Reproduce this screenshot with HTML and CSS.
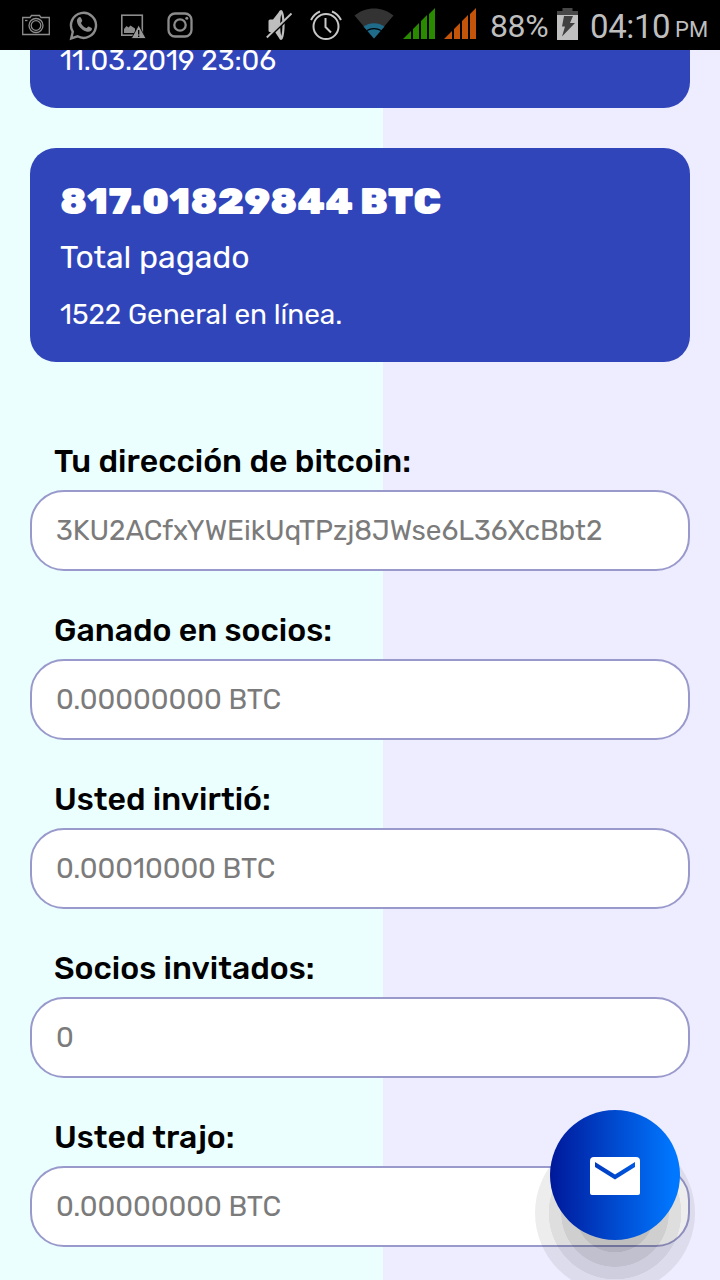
FILE: index.html
```html
<!DOCTYPE html>
<html lang="es">
<head>
    <meta charset="UTF-8">
    <meta name="viewport" content="width=device-width, initial-scale=1.0">
    <title>Bitcoin</title>
    <link rel="stylesheet" href="styles.css">
</head>
<body>
    <header class="status-bar">
        <div class="status-left">
            <svg class="icon-camera" width="28" height="24" viewBox="0 0 28 24" fill="none" stroke="#8c8c8c" stroke-width="1.3">
                <path d="M.7 4.500H8l1.500-2h8l1.500 2h8.300v17H.7z"/>
                <circle cx="14" cy="12.500" r="7"/>
                <circle cx="14" cy="12.500" r="4.800"/>
                <path d="M3 7.500h2.500"/>
            </svg>
            <svg class="icon-whatsapp" width="30" height="32" viewBox="0 0 30 32">
                <path d="M2.200 29.500l1.600-6.700A12.500 12.500 0 1 1 8.500 27.300z" fill="none" stroke="#8c8c8c" stroke-width="2.400"/>
                <path d="M9.300 8.800c.8-.9 2.200-1 2.700 0l1.200 2.700c.3 1-1.300 2-1.200 2.600.7 2.200 2.900 4.200 5.200 5 .8.2 1.700-1.900 2.600-1.600l2.800 1.400c.9.600.2 2.300-.8 3.100-2 1.500-4.800.8-8.200-1.300-3.300-2.200-5.600-5.600-5.700-8.700 0-1.300.6-2.400 1.400-3.200z" fill="#8c8c8c"/>
            </svg>
            <svg class="icon-image" width="25" height="25" viewBox="0 0 25 25">
                <rect x=".8" y="1.200" width="20.500" height="20" fill="none" stroke="#8c8c8c" stroke-width="1.600"/>
                <path d="M3 19v-4l2.500-3 2 1.500 2-2 4.500 3v4.500z" fill="#8c8c8c"/>
                <path d="M17.700 11L25 24.500H10.300z" fill="#999" stroke="#000" stroke-width=".8"/>
                <path d="M17.700 16v4.500M17.700 21.500V23" stroke="#000" stroke-width="1.300"/>
            </svg>
            <svg class="icon-instagram" width="26" height="26" viewBox="0 0 26 26" fill="none" stroke="#8c8c8c" stroke-width="2.300">
                <rect x="1.500" y="1.500" width="23" height="23" rx="6.500"/>
                <circle cx="13" cy="13" r="5.700"/>
                <circle cx="19.800" cy="6.300" r="1.500" fill="#8c8c8c" stroke="none"/>
            </svg>
        </div>
        <div class="status-right">
            <svg class="icon-mute" width="27" height="32" viewBox="0 0 27 32">
                <path d="M2.500 12q0-1.500 1.500-1.500h3l5.500-7c2-3.500 3.500-3 4.500-.5 2.200 6 2.200 20 0 26-1 2.500-3 2.500-4 0l-4-6H4q-1.500 0-1.500-1.500z" fill="#bebebe"/>
                <path d="M15.300 5c1.500 6 1.500 16 0 22-1.500-5-1.500-17 0-22z" fill="#000"/>
                <path d="M.5 30L26.500 5" stroke="#000" stroke-width="3"/>
                <path d="M.8 28.500L25.500 4.500" stroke="#bebebe" stroke-width="1.900"/>
            </svg>
            <svg class="icon-alarm" width="32" height="31" viewBox="0 0 32 31" fill="none" stroke="#c8c8c8" stroke-width="2">
                <circle cx="16" cy="16.500" r="12.500"/>
                <path d="M15.500 8v9l5.500 5.500"/>
                <path d="M1 10C3 6 6 3 10 1.500M31 10C29 6 26 3 22 1.500"/>
            </svg>
            <svg class="icon-wifi" width="40" height="31" viewBox="0 0 40 31">
                <path d="M.5 7.500C12-2 28-2 39.500 7.500L20 30.500z" fill="#333"/>
                <path d="M9.500 18.500C15.500 14 24.500 14 30.500 18.500L20 30.500z" fill="#1e6b8a"/>
                <path d="M13 22.500C17 20 23 20 27 22.500" fill="none" stroke="#000" stroke-width="1.300"/>
            </svg>
            <svg class="icon-signal" width="32" height="31" viewBox="0 0 32 31" fill="#298a00">
                <path d="M0 31l8-8v8zM10 21l6-6v16h-6zM18 13l6-6v24h-6zM26 6l6-6v31h-6z"/>
            </svg>
            <svg class="icon-signal" width="32" height="31" viewBox="0 0 32 31" fill="#c4540a">
                <path d="M0 31l8-8v8zM10 21l6-6v16h-6zM18 13l6-6v24h-6zM26 6l6-6v31h-6z"/>
            </svg>
            <span class="battery-level">88%</span>
            <svg class="icon-battery" width="21" height="32" viewBox="0 0 21 32">
                <path d="M0 3h5.500V0h10v3H21v4H0z" fill="#484848"/>
                <path d="M0 7h21v25H0z" fill="#c0c0c0"/>
                <path d="M7 8h9l-3 7h5L5 28.500l3-10H5z" fill="#404040"/>
            </svg>
            <span class="clock">04:10</span>
            <span class="clock-suffix">PM</span>
        </div>
    </header>

    <main class="content">
        <section class="card card-first">
            <p class="card-note card-date">11.03.2019 23:06</p>
        </section>
        <section class="card">
            <h2 class="card-amount">817.01829844 BTC</h2>
            <p class="card-title">Total pagado</p>
            <p class="card-note">1522 General en línea.</p>
        </section>

        <form class="account-form">
            <div class="field">
                <label for="address">Tu dirección de bitcoin:</label>
                <input type="text" id="address" placeholder="3KU2ACfxYWEikUqTPzj8JWse6L36XcBbt2">
            </div>
            <div class="field">
                <label for="earned">Ganado en socios:</label>
                <input type="text" id="earned" placeholder="0.00000000 BTC">
            </div>
            <div class="field">
                <label for="invested">Usted invirtió:</label>
                <input type="text" id="invested" placeholder="0.00010000 BTC">
            </div>
            <div class="field">
                <label for="partners">Socios invitados:</label>
                <input type="text" id="partners" placeholder="0">
            </div>
            <div class="field">
                <label for="brought">Usted trajo:</label>
                <input type="text" id="brought" placeholder="0.00000000 BTC">
            </div>
        </form>
    </main>

    <div class="mail-shadow"></div>
    <button class="mail-button" aria-label="Mensaje">
        <svg width="50" height="38" viewBox="0 0 50 38">
            <path fill="#fff" fill-rule="evenodd" d="M4 0h42q4 0 4 4v32q0 2-2 2H2q-2 0-2-2V4q0-4 4-4zM5 5v5l20 12.500L45 10V5L25 17.500z"/>
        </svg>
    </button>
</body>
</html>
```

FILE: styles.css
```css
* {
    box-sizing: border-box;
}
body {
    margin: 0;
    height: 1280px;
    overflow: hidden;
    font-family: Rubik, Roboto, sans-serif;
    background: linear-gradient(to right, #ebffff 383px, #eeedff 383px);
}
.status-bar {
    position: relative;
    z-index: 10;
    display: flex;
    justify-content: space-between;
    height: 50px;
    padding: 0 13px 0 22px;
    background-color: #000;
    color: #bebebe;
    font-family: Roboto, sans-serif;
}
.status-bar svg {
    display: block;
    flex: none;
}
.status-left, .status-right {
    display: flex;
    align-items: flex-start;
}
.icon-camera {
    margin-top: 13px;
}
.icon-whatsapp {
    margin: 9px 0 0 19px;
}
.icon-image {
    margin: 14px 0 0 22px;
}
.icon-instagram {
    margin: 12px 0 0 21px;
}
.icon-mute {
    margin-top: 9px;
}
.icon-alarm {
    margin: 10px 0 0 17px;
}
.icon-wifi {
    margin: 8px 0 0 12px;
}
.icon-signal {
    margin: 8px 0 0 9px;
}
.battery-level {
    width: 67px;
    margin-left: 14px;
    font-size: 32px;
    line-height: 52px;
    letter-spacing: -0.4px;
    white-space: nowrap;
}
.icon-battery {
    margin-top: 8px;
}
.clock {
    width: 80px;
    margin-left: 12px;
    font-size: 33px;
    line-height: 53px;
    letter-spacing: -0.4px;
}
.clock-suffix {
    width: 32px;
    margin-left: 5px;
    font-size: 22px;
    line-height: 59px;
}
.content {
    padding: 0 30px;
}
.card {
    height: 214px;
    padding: 33px 30px;
    border-radius: 26px;
    background-color: #3145bb;
    color: #fff;
}
.card-first {
    height: 98px;
    margin: -40px 0 40px;
}
.card h2, .card p {
    margin: 0;
    white-space: nowrap;
}
.card .card-amount {
    font-size: 38px;
    line-height: 40px;
    font-weight: 900;
}
.card .card-title {
    margin-top: 16px;
    font-size: 32px;
    line-height: 40px;
    letter-spacing: -0.06px;
}
.card .card-note {
    margin-top: 20px;
    font-size: 28px;
    line-height: 36px;
    letter-spacing: -0.06px;
}
.card .card-date {
    margin-top: 0;
}
.account-form {
    padding-top: 78px;
}
.field {
    height: 169px;
}
.field label {
    display: block;
    height: 50px;
    padding-left: 24px;
    font-size: 32px;
    line-height: 43px;
    font-weight: 500;
}
.field input {
    display: block;
    width: 100%;
    height: 81px;
    padding: 0 24px;
    border: 2px solid #9999cc;
    border-radius: 34px;
    background-color: #fff;
    font-family: inherit;
    font-size: 28px;
    letter-spacing: -0.06px;
}
.field input::placeholder {
    color: #7b7b7b;
}
/* stepped shadow under the floating button */
.mail-shadow {
    position: fixed;
    left: 535px;
    top: 1133px;
    width: 160px;
    height: 160px;
    border-radius: 50%;
    background: radial-gradient(circle, rgba(0, 0, 0, 0.25) 39px, rgba(0, 0, 0, 0.19) 39.500px 53.500px, rgba(0, 0, 0, 0.13) 54px 66px, rgba(0, 0, 0, 0.07) 66.500px);
}
.mail-button {
    position: fixed;
    left: 550px;
    top: 1110px;
    width: 130px;
    height: 130px;
    padding: 2px 0 0;
    display: flex;
    align-items: center;
    justify-content: center;
    border: none;
    border-radius: 50%;
    background: linear-gradient(to right, #00189a, #0077ff 95%);
    cursor: pointer;
}
```
